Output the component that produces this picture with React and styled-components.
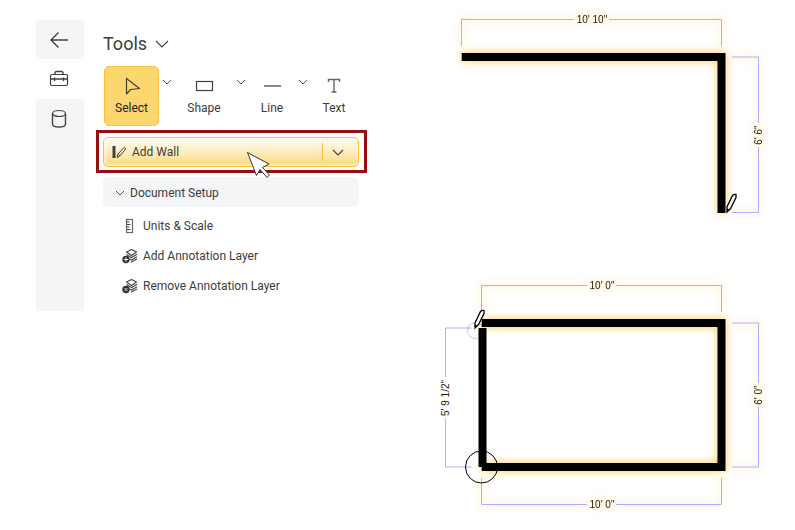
import React, { useState } from "react";
import styled, { createGlobalStyle } from "styled-components";

const GlobalStyle = createGlobalStyle`
  * {
    box-sizing: border-box;
  }
  body {
    margin: 0;
    background: #ffffff;
    color: #3c3c3c;
    font-family: Roboto, "Liberation Sans", sans-serif;
    font-size: 12px;
    line-height: 16px;
  }
  button {
    margin: 0;
    padding: 0;
    border: 0;
    background: none;
    color: inherit;
    font: inherit;
    cursor: pointer;
  }
  svg {
    display: block;
  }
`;

const Page = styled.div`
  display: flex;
  align-items: flex-start;
  min-height: 100vh;
  padding-left: 36px;
`;

const Rail = styled.nav`
  display: flex;
  flex-direction: column;
  flex: none;
  width: 48px;
  min-height: 291px;
  margin-top: 20px;
  background: #f4f5f7;
`;

const RailButton = styled.button`
  display: flex;
  align-items: center;
  justify-content: center;
  height: ${props => (props.$active ? "40px" : "39px")};
  padding-right: 2px;
  background: ${props => (props.$active ? "#ffffff" : "transparent")};
`;

const Panel = styled.section`
  flex: none;
  width: 283px;
  padding: 32px 8px 0 19px;
`;

const Title = styled.h1`
  display: flex;
  align-items: center;
  gap: 8px;
  height: 24px;
  margin: 0 0 10px;
  font-size: 18px;
  font-weight: 400;
  line-height: 24px;
`;

const Toolbar = styled.div`
  display: flex;
  align-items: flex-start;
  margin-bottom: 4px;
  padding-left: 1px;
`;

const ToolButton = styled.button`
  display: flex;
  flex-direction: column;
  align-items: center;
  gap: 4px;
  flex: none;
  width: ${props => props.$width}px;
  height: 60px;
  padding-top: 9px;
  border: 1px solid ${props => (props.$active ? "#fbbd3c" : "transparent")};
  border-radius: 5px;
  background: ${props => (props.$active ? "#fcd770" : "transparent")};
  color: ${props => (props.$active ? "#1c1c1c" : "#3c3c3c")};
`;

const MoreButton = styled.button`
  display: flex;
  align-items: center;
  justify-content: center;
  flex: none;
  width: 16px;
  height: 32px;
`;

const Highlight = styled.div`
  position: relative;
  margin: 0 -8px 4px -7px;
  padding: 4px 5px 3px 4px;
  border: 3px solid #960f0c;
`;

const SplitButton = styled.div`
  display: flex;
  align-items: center;
  height: 30px;
  border: 1px solid #fbbd3c;
  border-radius: 5px;
  background: linear-gradient(#fffdf8, #fee9b4 60%, #fcd672);
  box-shadow: inset 0 0 3px 1px #fff6dc;
`;

const WallButton = styled.button`
  display: flex;
  align-items: center;
  gap: 6px;
  flex: 1;
  height: 18px;
  padding-left: 8px;
  border-right: 1px solid #fbbd3c;
`;

const WallMore = styled.button`
  display: flex;
  align-items: center;
  justify-content: center;
  width: 35px;
  height: 28px;
  padding-right: 5px;
`;

const Pointer = styled.svg`
  position: absolute;
  top: 18px;
  left: 147px;
  pointer-events: none;
`;

const SectionHeader = styled.button`
  display: flex;
  align-items: center;
  gap: 5px;
  width: 100%;
  height: 30px;
  padding: 2px 12px 0;
  border-radius: 5px;
  background: #f4f5f7;
`;

const List = styled.ul`
  margin: 4px 0 0;
  padding: 0;
  list-style: none;
`;

const ListButton = styled.button`
  display: flex;
  align-items: center;
  gap: 5px;
  width: 100%;
  height: 30px;
  padding-left: 19px;
`;

const Canvas = styled.main`
  display: flex;
  flex-direction: column;
  flex: 1;
  gap: 20px;
  min-width: 0;
  padding-left: 63px;
`;

const Drawing = styled.svg`
  max-width: 100%;
  height: auto;
`;

const Glow = styled.g`
  filter: drop-shadow(0 0 4px #ffc84f);
`;

const DimLine = styled.path`
  fill: none;
  stroke: #aeaeff;
  stroke-width: 1;
`;

const DimText = styled.text`
  fill: #2a2005;
  font-family: "Liberation Sans", sans-serif;
  font-size: 10px;
  text-anchor: middle;
`;

const Wall = styled.path`
  fill: none;
  stroke: #000000;
  stroke-width: 8;
`;

const Icon = ({ size = 20, width = size, height = size, children }) => (
  <svg
    width={width}
    height={height}
    viewBox={`0 0 ${width} ${height}`}
    fill="none"
    stroke="#404040"
    strokeWidth="1.2"
    aria-hidden="true"
  >
    {children}
  </svg>
);

const Chevron = ({ w = 8 }) => (
  <Icon width={w + 2} height={w / 2 + 2}>
    <path d={`M1 1L${w / 2 + 1} ${w / 2 + 1}L${w + 1} 1`} strokeWidth={w > 8 ? 1.1 : 0.9} />
  </Icon>
);

const BackIcon = () => (
  <Icon>
    <path d="M9.500 2.500L2 10l7.500 7.500M2 10h17" strokeWidth="1.400" />
  </Icon>
);

const ToolboxIcon = () => (
  <Icon>
    <rect x="1.500" y="5.500" width="17" height="11" rx="1.500" />
    <path d="M6 5.500V4a1.500 1.500 0 0 1 1.500-1.500h5A1.500 1.500 0 0 1 14 4v1.500M1.500 10h17M5.500 8.500v3.500M14.500 8.500v3.500" strokeWidth="1.400" />
  </Icon>
);

const DatabaseIcon = () => (
  <Icon>
    <ellipse cx="10" cy="4.500" rx="6.500" ry="3" />
    <path d="M3.500 4.500V15c0 1.700 2.900 3 6.500 3s6.500-1.300 6.500-3V4.500" strokeWidth="1.400" />
  </Icon>
);

const SelectIcon = () => (
  <Icon>
    <path d="M4.500 2.500V18l4-4.500L17.500 12.500z" strokeLinejoin="round" />
  </Icon>
);

const ShapeIcon = () => (
  <Icon>
    <rect x="2.500" y="5.500" width="16" height="9" />
  </Icon>
);

const LineIcon = () => (
  <Icon>
    <path d="M2 10h17" stroke="#555555" strokeWidth="1.400" />
  </Icon>
);

const TextIcon = () => (
  <Icon>
    <path d="M4.500 6V3.500h11V6M10 3.500v12.500M7.500 16h5" stroke="#666666" strokeWidth="1.400" />
  </Icon>
);

const WallIcon = () => (
  <Icon width={14} height={14}>
    <path d="M2 1v12" strokeWidth="3" />
    <path d="M5 12.500l1-3.500 5.500-6q1-.8 1.700 0t0 1.700L7.800 11z" strokeWidth="1" />
    <path d="M6 9l2 2" strokeWidth=".8" />
  </Icon>
);

const RulerIcon = () => (
  <Icon width={16} height={16}>
    <rect x="4.500" y="1.500" width="6" height="13" stroke="#666666" />
    <path d="M5 4h2.500M5 6.500h3.500M5 9h2.500M5 11.500h3.500" strokeWidth="1" />
  </Icon>
);

const LayerIcon = ({ remove }) => (
  <Icon width={16} height={16}>
    <path d="M9.500 1.500l5 2.500-5 3.500-5-3.500z" strokeLinejoin="round" stroke="#444444" strokeWidth="1.100" />
    <path d="M4.500 6.500l5 3 5.500-3.200M8 11l1.500 1 5.500-3.200M9 14.300l6-3.300" stroke="#444444" strokeWidth="1.100" />
    <circle cx="4" cy="11.500" r="3.700" fill="#333333" stroke="none" />
    {remove ? (
      <path d="M2.700 10.200l2.600 2.600M5.300 10.200l-2.600 2.600" stroke="#ffffff" strokeWidth=".9" />
    ) : (
      <path d="M4 9.300v4.400M1.800 11.500h4.400" stroke="#ffffff" strokeWidth=".9" />
    )}
  </Icon>
);

// pencil cursor, the tip is at x, y
const Pencil = ({ x, y }) => (
  <g transform={`translate(${x} ${y})`}>
    <path
      d="M0 0V-5L5.500-16.500Q7-18 9-17.500V-14.500L3.500-3.500z"
      fill="#ffffff"
      stroke="#000000"
      strokeWidth="1.300"
    />
    <path d="M0 0V-3.500L2.500-2z" fill="#000000" />
  </g>
);

const VerticalText = ({ x, y, children }) => (
  <DimText transform={`translate(${x} ${y}) rotate(-90)`}>{children}</DimText>
);

const OpenWalls = () => (
  <Drawing width="357" height="230" viewBox="430 0 357 230" role="img" aria-label="Two walls">
    <Glow>
      <Wall d="M461.700 57H721.500V213" />
      <DimLine d="M461.500 46V19.500H574M609 19.500H721.500V46" />
      <DimLine d="M732 57H758.500V123M758.500 147V212.500H732" />
      <DimText x="592" y="23">10' 10"</DimText>
      <VerticalText x={762} y={135}>6' 6"</VerticalText>
    </Glow>
    <Pencil x={727} y={212} />
  </Drawing>
);

const ClosedWalls = () => (
  <Drawing width="357" height="280" viewBox="430 250 357 280" role="img" aria-label="Four walls">
    <Glow>
      <Wall d="M481.700 323H721.500V467H481.700" />
      <DimLine d="M481.500 312V285.500H587M616 285.500H721.500V312" />
      <DimLine d="M732 323H758.500V383M758.500 407V467H732" />
      <DimLine d="M481.500 478V504.500H587M616 504.500H721.500V478" />
      <DimText x="602" y="289">10' 0"</DimText>
      <DimText x="602" y="508">10' 0"</DimText>
      <VerticalText x={762} y={395}>6' 0"</VerticalText>
    </Glow>
    <Wall d="M482.500 328V467" />
    <DimLine d="M471.500 328H445.500V377M445.500 418V467H471.500" />
    <VerticalText x={449} y={398}>5' 9 1/2"</VerticalText>
    <circle cx="475.500" cy="330.500" r="8" fill="none" stroke="#000000" strokeOpacity=".2" />
    <circle cx="481.500" cy="467" r="16" fill="none" stroke="#000000" />
    <Pencil x={475} y={328} />
  </Drawing>
);

const tools = [
  { name: "Select", width: 55, icon: SelectIcon, more: true },
  { name: "Shape", width: 58, icon: ShapeIcon, more: true },
  { name: "Line", width: 46, icon: LineIcon, more: true },
  { name: "Text", width: 46, icon: TextIcon },
];

function App() {
  const [tool, setTool] = useState("Select");
  const [open, setOpen] = useState(true);

  return (
    <>
      <GlobalStyle />
      <Page>
        <Rail>
          <RailButton aria-label="Back"><BackIcon /></RailButton>
          <RailButton aria-label="Tools" $active><ToolboxIcon /></RailButton>
          <RailButton aria-label="Data"><DatabaseIcon /></RailButton>
        </Rail>

        <Panel>
          <Title>Tools <Chevron w={12} /></Title>

          <Toolbar>
            {tools.map(({ name, width, icon: ToolIcon, more }) => (
              <React.Fragment key={name}>
                <ToolButton $width={width} $active={tool === name} onClick={() => setTool(name)}>
                  <ToolIcon />
                  {name}
                </ToolButton>
                {more && <MoreButton aria-label={`${name} options`}><Chevron /></MoreButton>}
              </React.Fragment>
            ))}
          </Toolbar>

          <Highlight>
            <SplitButton>
              <WallButton><WallIcon /> Add Wall</WallButton>
              <WallMore aria-label="Add Wall options"><Chevron w={10} /></WallMore>
            </SplitButton>
            <Pointer width="27" height="28" viewBox="0 0 27 28" aria-hidden="true">
              <path
                d="M1.500 1.500L10.500 24.500L14 18.500L21 26.500L23.500 24L16.500 16.500L23 13z"
                fill="#ffffff"
                stroke="#333333"
              />
            </Pointer>
          </Highlight>

          <SectionHeader aria-expanded={open} onClick={() => setOpen(!open)}>
            <Chevron /> Document Setup
          </SectionHeader>
          {open && (
            <List>
              <li><ListButton><RulerIcon /> Units &amp; Scale</ListButton></li>
              <li><ListButton><LayerIcon /> Add Annotation Layer</ListButton></li>
              <li><ListButton><LayerIcon remove /> Remove Annotation Layer</ListButton></li>
            </List>
          )}
        </Panel>

        <Canvas>
          <OpenWalls />
          <ClosedWalls />
        </Canvas>
      </Page>
    </>
  );
}

export default App;
